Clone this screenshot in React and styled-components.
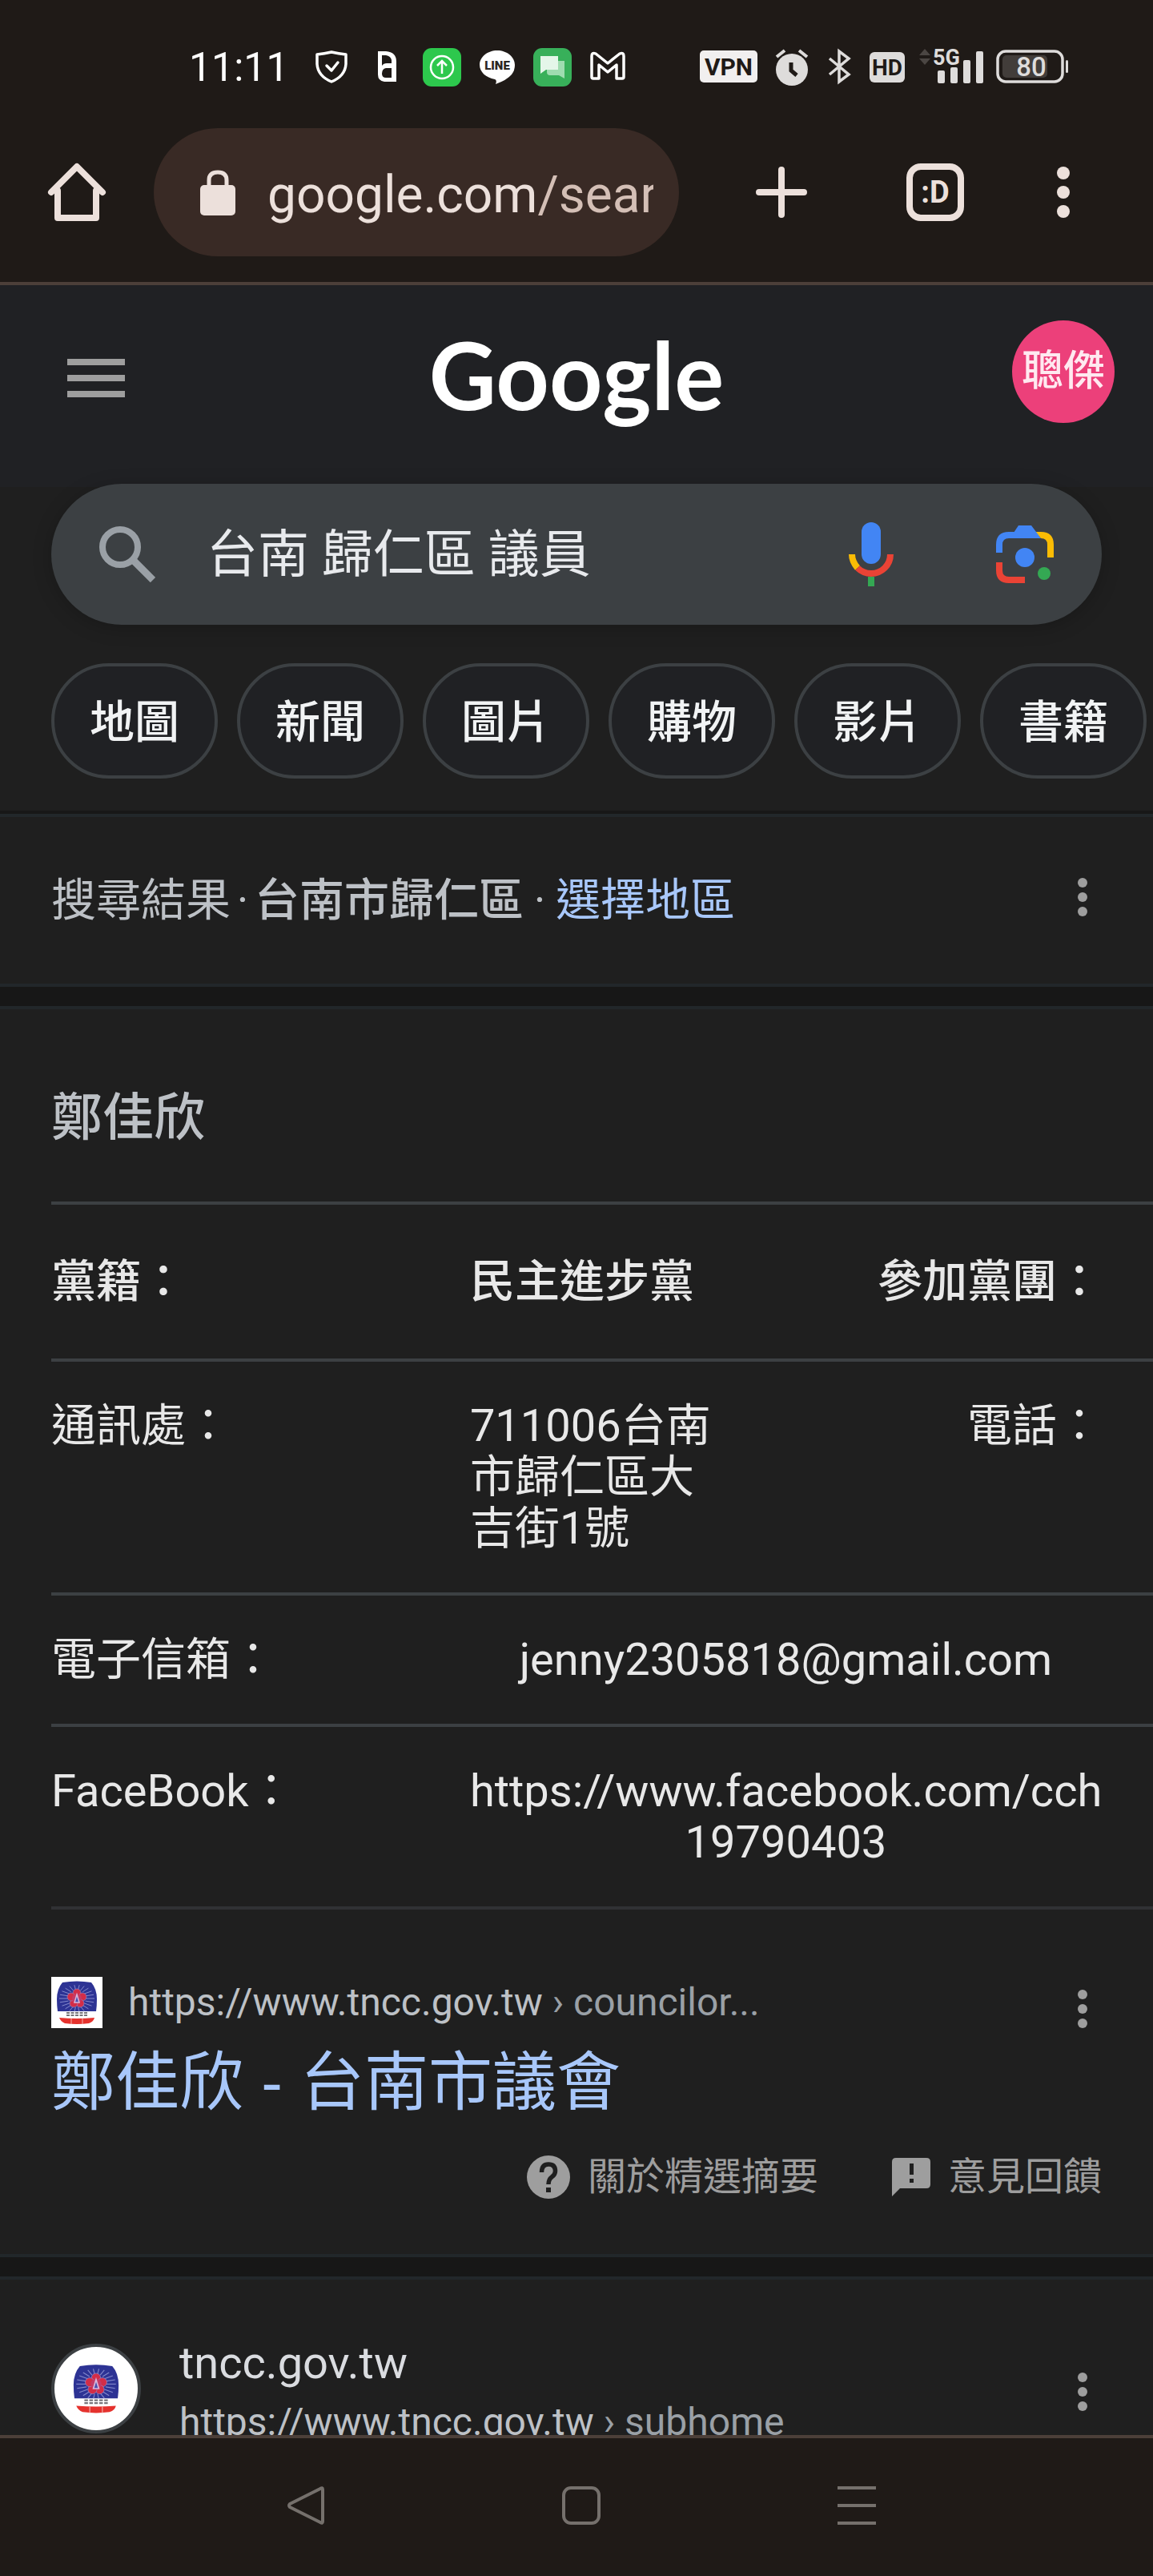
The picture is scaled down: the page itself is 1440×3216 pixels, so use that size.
import React from "react";
import styled, { createGlobalStyle } from "styled-components";

const Global = createGlobalStyle`
  *, *::before, *::after { box-sizing: border-box; }
  html, body, #root { height: 100%; }
  body { margin: 0; background: #1f1f1f; }
  button, input { font: inherit; color: inherit; border: 0; padding: 0; margin: 0; background: none; outline: 0; }
  a { color: inherit; text-decoration: none; }
  svg { display: block; flex: none; }
`;

const Screen = styled.div`
  height: 100%;
  display: flex;
  flex-direction: column;
  overflow: hidden;
  color: #e8e8e8;
  font-family: Roboto, "Noto Sans CJK TC", sans-serif;
  font-size: 56px;
  line-height: 64px;
`;

const StatusBar = styled.div`
  flex: none;
  display: flex;
  align-items: center;
  justify-content: space-between;
  height: 160px;
  padding: 8px 104px 0 236px;
  background: #1f1a17;
`;

const StatusGroup = styled.div`
  display: flex;
  align-items: center;
  gap: ${(p) => p.$gap}px;
`;

const IconSlot = styled.span`
  display: flex;
  justify-content: center;
  width: 48px;
`;

const Clock = styled.time`
  margin-right: 8px;
  font-size: 50px;
  color: #fff;
`;

const Toolbar = styled.div`
  flex: none;
  display: flex;
  align-items: center;
  height: 196px;
  padding: 0 96px 32px 56px;
  background: #1f1a17;
  border-bottom: 4px solid #4c3f39;
  color: #ece0db;
`;

const UrlField = styled.label`
  flex: 1;
  min-width: 0;
  display: flex;
  align-items: center;
  gap: 40px;
  height: 160px;
  margin: 0 92px 0 56px;
  padding: 0 32px 0 58px;
  border-radius: 80px;
  background: #392a25;
`;

const UrlText = styled.span`
  flex: 1;
  padding-top: 8px;
  overflow: hidden;
  white-space: nowrap;
  font-size: 64px;
  line-height: 80px;

  span { color: #d4bfb6; }
`;

const ToolActions = styled.div`
  display: flex;
  align-items: center;
`;

const IconButton = styled.button`
  flex: none;
  display: flex;
  align-items: center;
  justify-content: center;
  margin-left: ${(p) => p.$space || 0}px;
  padding-top: ${(p) => p.$drop || 0}px;
`;

const TabSwitcher = styled(IconButton)`
  width: 72px;
  height: 72px;
  border: 8px solid #ece0db;
  border-radius: 18px;
  font-size: 38px;
  font-weight: 700;
`;

const Viewport = styled.main`
  flex: 1;
  min-height: 0;
  overflow: hidden;
`;

const Header = styled.header`
  display: grid;
  grid-template-columns: 1fr auto 1fr;
  align-items: start;
  height: 252px;
  padding: 44px 48px 0;
  background: #202124;
`;

const MenuButton = styled(IconButton)`
  justify-self: start;
  margin: 48px 0 0 36px;
`;

const Logo = styled.a`
  color: #fff;
  font-family: Lato, sans-serif;
  font-size: 116px;
  font-weight: 700;
  line-height: 136px;
`;

const Avatar = styled.button`
  justify-self: end;
  width: 128px;
  height: 128px;
  border-radius: 50%;
  background: #ec407a;
  color: #ffe9f0;
  font-size: 52px;
  font-weight: 500;
`;

const SearchBox = styled.form`
  display: flex;
  align-items: center;
  height: 176px;
  margin: -4px 64px 0;
  padding: 0 60px;
  border-radius: 88px;
  background: #3c4043;
  box-shadow: 0 4px 24px rgba(0, 0, 0, 0.2);
`;

const SearchInput = styled.input`
  flex: 1;
  min-width: 0;
  height: 112px;
  margin-left: 64px;
  padding-bottom: 12px;
  font-size: 64px;
  color: #e8eaed;
`;

const Chips = styled.nav`
  display: flex;
  gap: 24px;
  padding: 48px 0 40px 64px;
  overflow: hidden;
`;

const Chip = styled.a`
  flex: none;
  display: flex;
  align-items: center;
  justify-content: center;
  width: 208px;
  height: 144px;
  padding-top: 4px;
  border: 4px solid #3c4043;
  border-radius: 72px;
  background: #202124;
  color: #f1f3f4;
  font-weight: 500;
`;

const Region = styled.section`
  display: flex;
  align-items: center;
  justify-content: space-between;
  height: 216px;
  padding: 0 82px 4px 64px;
  border-top: 4px solid #171717;
  box-shadow: inset 0 4px #22272a;
  color: #bdc1c6;
`;

const RegionText = styled.p`
  margin: 0;
  padding-top: 8px;
  strong { font-weight: 500; }
  a { color: #a8c7fa; }
`;

const Dot = styled.span`
  display: inline-block;
  width: ${(p) => p.$width}px;
  text-align: center;
`;

const Divider = styled.div`
  height: 32px;
  border: solid #22272a;
  border-width: 4px 0;
  background: #171717;
`;

const Snippet = styled.section`
  padding: 104px 0 64px 64px;
`;

const Name = styled.h2`
  margin: 0 0 72px;
  color: #bdc1c6;
  font-size: 64px;
  font-weight: 500;
  line-height: 64px;
`;

const Facts = styled.table`
  width: 100%;
  border-collapse: separate;
  border-spacing: 0;
  table-layout: fixed;
  text-align: left;
  border-bottom: 4px solid #303134;
`;

const Column = styled.col`
  width: ${(p) => p.$width || "auto"};
`;

const Row = styled.tr`
  th, td {
    padding: ${(p) => p.$space}px 0;
    border-top: 4px solid #3c4043;
    font-weight: ${(p) => (p.$strong ? 500 : 400)};
    vertical-align: top;
    white-space: nowrap;
  }
`;

const Cell = styled.td`
  && {
    padding-right: 64px;
    text-align: ${(p) => p.$align || "left"};
  }
`;

const SourceLine = styled.div`
  display: flex;
  align-items: center;
  height: 64px;
  margin-top: 84px;
  padding-right: 82px;
`;

const Url = styled.cite`
  flex: 1;
  margin-left: 32px;
  font-size: 48px;
  font-style: normal;
  color: #bdc1c6;
  span { color: #9aa0a6; }
`;

const ResultTitle = styled.h3`
  margin: 20px 0 0;
  color: #a8c7fa;
  font-family: "Liberation Sans", "Noto Sans CJK TC", sans-serif;
  font-size: 80px;
  font-weight: 400;
  line-height: 96px;
`;

const Feedback = styled.div`
  display: flex;
  justify-content: flex-end;
  gap: 92px;
  margin-top: 38px;
  padding-right: 64px;
  color: #9e9e9e;
  font-size: 48px;
`;

const FeedbackLink = styled.a`
  display: flex;
  align-items: center;
  gap: 22px;
`;

const Result = styled.section`
  display: flex;
  align-items: flex-start;
  padding: 72px 82px 0 64px;
`;

const RoundIcon = styled.span`
  flex: none;
  display: flex;
  align-items: center;
  justify-content: center;
  width: 112px;
  height: 112px;
  margin-top: 8px;
  border: 4px solid #3c4043;
  border-radius: 50%;
  background: #fff;
`;

const ResultText = styled.a`
  flex: 1;
  display: flex;
  flex-direction: column;
  gap: 10px;
  margin-left: 48px;
  color: #dadce0;
`;

const ResultUrl = styled(Url)`
  margin: 0;
`;

const NavBar = styled.nav`
  flex: none;
  display: flex;
  align-items: center;
  justify-content: center;
  gap: 296px;
  height: 176px;
  padding: 0 0 4px 12px;
  border-top: 4px solid #4c3f39;
  background: #1f1a17;
`;

const StatusIcon = ({ w, h = 48, children, ...rest }) => (
  <svg width={w} height={h} viewBox={`0 0 ${w} ${h}`} fill="none" aria-hidden="true" {...rest}>
    {children}
  </svg>
);

const Kebab = () => (
  <svg width="12" height="48" viewBox="0 0 12 48" fill="#9e9e9e" aria-hidden="true">
    <circle cx="6" cy="6" r="6" />
    <circle cx="6" cy="24" r="6" />
    <circle cx="6" cy="42" r="6" />
  </svg>
);

const rays = Array.from({ length: 22 }, (_, i) => (i * Math.PI) / 11);

const Emblem = ({ size, plate }) => (
  <svg width={size} height={size} viewBox="0 0 64 64" aria-hidden="true">
    {plate && <rect width="64" height="64" fill="#fff" />}
    <path d="M14 7Q32 4 50 7Q57 15 57 28Q57 36 56 43H8Q7 36 7 28Q7 15 14 7Z" fill="#2d3394" />
    {rays.map((a) => (
      <line
        key={a}
        x1={32 + 11 * Math.cos(a)}
        y1={27 + 11 * Math.sin(a)}
        x2={32 + 22 * Math.cos(a)}
        y2={27 + 17 * Math.sin(a)}
        stroke="#8489cc"
        strokeWidth="1"
      />
    ))}
    <g fill="#d32d48" stroke="#8f8fd0" strokeWidth="0.6">
      <circle cx="32" cy="20" r="5" />
      <circle cx="39" cy="25" r="5" />
      <circle cx="36" cy="33" r="5" />
      <circle cx="28" cy="33" r="5" />
      <circle cx="25" cy="25" r="5" />
    </g>
    <circle cx="32" cy="27" r="6" fill="#c53a66" />
    <path d="M32 22L35 32H29Z" fill="#4a50b0" stroke="#d9b7db" strokeWidth="1.5" />
    <path d="M8 43H56V51H8Z" fill="#fff" />
    <path d="M19 45H46M19 48H46" stroke="#77757a" strokeWidth="2" strokeDasharray="4 1.5" />
    <path d="M10 51Q32 53 54 51Q53 56 47 58Q32 60 17 58Q12 56 10 51Z" fill="#e5322d" />
    <path d="M25 52V59M39 52V59" stroke="#f5b2ac" strokeWidth="1" />
  </svg>
);

const chips = ["地圖", "新聞", "圖片", "購物", "影片", "書籍"];

export default function App() {
  return (
    <Screen lang="zh-Hant">
      <Global />
      <StatusBar>
        <StatusGroup $gap={21}>
          <Clock>11:11</Clock>
          <IconSlot>
            <StatusIcon w={48} stroke="#fff" strokeWidth="3.5" strokeLinecap="round" strokeLinejoin="round">
              <path d="M24 5Q33 7 42 8V20Q41 35 24 42Q7 35 6 20V8Q15 7 24 5Z" />
              <path d="M18 22L24 28L32 18" />
            </StatusIcon>
          </IconSlot>
          <IconSlot>
            <StatusIcon w={36}>
              <path fillRule="evenodd" fill="#fff" d="M7 4H17Q30 5 30 17V42H15Q7 41 7 33ZM12 9V22Q14 19 18 19H24V15Q23 10 17 9ZM24 25H17Q12 26 12 32Q12 37 17 37H24Z" />
            </StatusIcon>
          </IconSlot>
          <IconSlot>
            <StatusIcon w={48}>
              <rect width="48" height="48" rx="11" fill="#2dc84d" />
              <circle cx="24" cy="24" r="14" stroke="#fff" strokeWidth="2.5" />
              <path d="M24 32V17M18 22L24 16L30 22" stroke="#fff" strokeWidth="2.5" />
            </StatusIcon>
          </IconSlot>
          <IconSlot>
            <StatusIcon w={44}>
              <path d="M22 3C10 3 0 11 0 21C0 30 8 37 19 39Q22 40 20 45Q34 40 40 33Q44 28 44 21C44 11 34 3 22 3Z" fill="#fff" />
              <text x="22" y="27" textAnchor="middle" fill="#2b2522" fontFamily="Roboto" fontSize="15" fontWeight="900">LINE</text>
            </StatusIcon>
          </IconSlot>
          <IconSlot>
            <StatusIcon w={48}>
              <rect width="48" height="48" rx="11" fill="#38b05a" />
              <path d="M17 16H39V38L32 34H21Q17 34 17 30Z" fill="#9fdcb0" />
              <path d="M9 10H31V27H16L9 32Z" fill="#e4f6e9" />
            </StatusIcon>
          </IconSlot>
          <IconSlot>
            <StatusIcon w={44} stroke="#fff" strokeWidth="3.5" strokeLinejoin="round">
              <path d="M2 36V10Q2 5 7 7L22 19L37 7Q42 5 42 10V36Q42 38 40 38H33V21L22 30L11 21V38H4Q2 38 2 36Z" />
            </StatusIcon>
          </IconSlot>
        </StatusGroup>
        <StatusGroup $gap={15}>
          <StatusGroup $gap={22}>
            <StatusIcon w={72}>
              <rect y="3" width="72" height="40" rx="5" fill="#f1efef" />
              <text x="36" y="34" textAnchor="middle" fill="#1f1a17" fontFamily="Roboto" fontSize="30" fontWeight="700">VPN</text>
            </StatusIcon>
            <StatusIcon w={42}>
              <circle cx="21" cy="27" r="20" fill="#dedcdb" />
              <path d="M2 11L12 3M40 11L30 3" stroke="#dedcdb" strokeWidth="4" />
              <path d="M20 18V28L27 34" stroke="#1f1a17" strokeWidth="5" />
            </StatusIcon>
            <StatusIcon w={32} stroke="#dedcdb" strokeWidth="3.5">
              <path d="M4 13L28 33L16 42V4L28 13L4 33" />
            </StatusIcon>
            <StatusIcon w={44}>
              <rect y="5" width="44" height="38" rx="6" fill="#dedcdb" />
              <text x="22" y="34" textAnchor="middle" fill="#1f1a17" fontFamily="Roboto" fontSize="28" fontWeight="700">HD</text>
            </StatusIcon>
          </StatusGroup>
          <StatusIcon w={84} fill="#dedcdb">
            <path d="M3 9L10 1L17 9ZM3 13H17L10 21Z" fill="#4b4643" />
            <text x="20" y="21" fill="#dedcdb" fontFamily="Roboto" fontSize="27" fontWeight="700">5G</text>
            <rect x="26" y="28" width="9" height="16" rx="2" />
            <rect x="42" y="24" width="9" height="20" rx="2" />
            <rect x="58" y="15" width="9" height="29" rx="2" />
            <rect x="74" y="4" width="9" height="40" rx="2" />
          </StatusIcon>
          <StatusIcon w={92}>
            <rect x="2" y="4" width="81" height="38" rx="10" stroke="#dedcdb" strokeWidth="3.5" />
            <rect x="8" y="9" width="56" height="28" rx="5" fill="#423d3a" />
            <rect x="87" y="15" width="3" height="16" rx="1.5" fill="#dedcdb" />
            <text x="44" y="35" textAnchor="middle" fill="#dedcdb" fontFamily="Roboto" fontSize="33" fontWeight="500">80</text>
          </StatusIcon>
        </StatusGroup>
      </StatusBar>

      <Toolbar>
        <IconButton aria-label="首頁">
          <svg width="80" height="80" viewBox="0 0 80 80" fill="none" stroke="#ece0db" strokeWidth="8" strokeLinecap="round" strokeLinejoin="round" aria-hidden="true">
            <path d="M8 40L40 8L72 40M16 38V72H64V38" />
          </svg>
        </IconButton>
        <UrlField>
          <svg width="44" height="60" viewBox="0 0 44 60" aria-hidden="true">
            <path d="M11 26V15Q11 5 22 5Q33 5 33 15V26" fill="none" stroke="#ece0db" strokeWidth="5" />
            <rect y="21" width="44" height="38" rx="5" fill="#ece0db" />
          </svg>
          <UrlText>google.com<span>/sear</span></UrlText>
        </UrlField>
        <ToolActions>
          <IconButton aria-label="新增分頁">
            <svg width="72" height="64" viewBox="0 0 72 64" stroke="#ece0db" strokeWidth="8" strokeLinecap="round" aria-hidden="true">
              <path d="M36 4V60M8 32H64" />
            </svg>
          </IconButton>
          <TabSwitcher $space={120} aria-label="分頁">:D</TabSwitcher>
          <IconButton $space={108} aria-label="更多">
            <svg width="32" height="64" viewBox="0 0 32 64" fill="#ece0db" aria-hidden="true">
              <circle cx="16" cy="8" r="8" />
              <circle cx="16" cy="32" r="8" />
              <circle cx="16" cy="56" r="8" />
            </svg>
          </IconButton>
        </ToolActions>
      </Toolbar>

      <Viewport>
        <Header>
          <MenuButton aria-label="選單">
            <svg width="72" height="48" viewBox="0 0 72 48" fill="#9e9e9e" aria-hidden="true">
              <path d="M0 0H72V8H0ZM0 20H72V28H0ZM0 40H72V48H0Z" />
            </svg>
          </MenuButton>
          <Logo href="#">Google</Logo>
          <Avatar>聰傑</Avatar>
        </Header>

        <SearchBox role="search">
          <svg width="70" height="70" viewBox="0 0 70 70" fill="none" stroke="#9aa0a6" strokeWidth="8" aria-hidden="true">
            <circle cx="26" cy="26" r="22" />
            <path d="M42 42L67 67" strokeWidth="9" />
          </svg>
          <SearchInput aria-label="搜尋" defaultValue="台南 歸仁區 議員" />
          <IconButton type="button" aria-label="語音搜尋">
            <svg width="56" height="80" viewBox="0 0 56 80" fill="none" aria-hidden="true">
              <rect x="16" width="24" height="52" rx="12" fill="#4285f4" />
              <path d="M4 40Q4 49 11 57" stroke="#fbbc04" strokeWidth="8" />
              <path d="M11 57Q18 64 28 64Q38 64 45 57Q52 50 52 40" stroke="#ea4335" strokeWidth="8" />
              <path d="M28 68V80" stroke="#34a853" strokeWidth="8" />
            </svg>
          </IconButton>
          <IconButton $space={128} type="button" aria-label="以圖搜尋">
            <svg width="72" height="72" viewBox="0 0 72 72" fill="none" aria-hidden="true">
              <path d="M4 34V24Q4 12 16 12H54" stroke="#4285f4" strokeWidth="8" />
              <path d="M22 9L28 0H44L56 16H22Z" fill="#4285f4" />
              <path d="M50 8H56Q72 8 72 24V40H64V24Q64 16 56 16Z" fill="#fbbc04" />
              <path d="M4 46V56Q4 68 16 68H36" stroke="#ea4335" strokeWidth="8" />
              <circle cx="36" cy="40" r="12" fill="#4285f4" />
              <circle cx="60" cy="60" r="8" fill="#34a853" />
            </svg>
          </IconButton>
        </SearchBox>

        <Chips>
          {chips.map((c) => (
            <Chip key={c} href="#">{c}</Chip>
          ))}
        </Chips>

        <Region>
          <RegionText>
            搜尋結果<Dot $width={30}>·</Dot><strong>台南市歸仁區</strong><Dot $width={40}>·</Dot><a href="#">選擇地區</a>
          </RegionText>
          <IconButton aria-label="更多選項"><Kebab /></IconButton>
        </Region>
        <Divider />

        <Snippet>
          <Name>鄭佳欣</Name>
          <Facts>
            <colgroup>
              <Column $width="38%" />
              <Column />
              <Column $width="31%" />
            </colgroup>
            <tbody>
              <Row $space={64} $strong>
                <th scope="row">黨籍：</th>
                <Cell>民主進步黨</Cell>
                <Cell $align="right">參加黨團：</Cell>
              </Row>
              <Row $space={48}>
                <th scope="row">通訊處：</th>
                <Cell>711006台南<br />市歸仁區大<br />吉街1號</Cell>
                <Cell $align="right">電話：</Cell>
              </Row>
              <Row $space={48}>
                <th scope="row">電子信箱：</th>
                <Cell colSpan={2} $align="center">jenny2305818@gmail.com</Cell>
              </Row>
              <Row $space={48}>
                <th scope="row">FaceBook：</th>
                <Cell colSpan={2} $align="center">https://www.facebook.com/cch<br />19790403</Cell>
              </Row>
            </tbody>
          </Facts>

          <SourceLine>
            <Emblem size={64} plate />
            <Url>https://www.tncc.gov.tw<span> › councilor...</span></Url>
            <IconButton aria-label="更多選項" $drop={16}><Kebab /></IconButton>
          </SourceLine>
          <ResultTitle><a href="#">鄭佳欣 - 台南市議會</a></ResultTitle>
          <Feedback>
            <FeedbackLink href="#">
              <svg width="54" height="54" viewBox="0 0 54 54" aria-hidden="true">
                <circle cx="27" cy="27" r="27" fill="#9e9e9e" />
                <path d="M18.500 21Q18.500 11 27 11Q35.500 11 35.500 19.500Q35.500 24 31 27Q27 30 27 36" fill="none" stroke="#1f1f1f" strokeWidth="5.500" />
                <path d="M24 40H30V46H24Z" fill="#1f1f1f" />
              </svg>
              關於精選摘要
            </FeedbackLink>
            <FeedbackLink href="#">
              <svg width="48" height="48" viewBox="0 0 48 48" aria-hidden="true">
                <path d="M5 0H43Q48 0 48 5V33Q48 38 43 38H10L0 48V5Q0 0 5 0Z" fill="#9e9e9e" />
                <path d="M22 7H27V21H22ZM22 26H27V31H22Z" fill="#1f1f1f" />
              </svg>
              意見回饋
            </FeedbackLink>
          </Feedback>
        </Snippet>
        <Divider />

        <Result>
          <RoundIcon><Emblem size={72} /></RoundIcon>
          <ResultText href="#">
            tncc.gov.tw
            <ResultUrl>https://www.tncc.gov.tw<span> › subhome</span></ResultUrl>
          </ResultText>
          <IconButton aria-label="更多選項" $drop={44}><Kebab /></IconButton>
        </Result>
      </Viewport>

      <NavBar>
        <IconButton aria-label="返回">
          <svg width="48" height="48" viewBox="0 0 48 48" fill="none" stroke="#75706c" strokeWidth="4" strokeLinejoin="round" aria-hidden="true">
            <path d="M45 4V44Q45 47 42 45L4 26Q2 24 4 22L42 3Q45 1 45 4Z" />
          </svg>
        </IconButton>
        <IconButton aria-label="主畫面">
          <svg width="48" height="48" viewBox="0 0 48 48" fill="none" stroke="#75706c" strokeWidth="4" aria-hidden="true">
            <rect x="2" y="2" width="44" height="44" rx="9" />
          </svg>
        </IconButton>
        <IconButton aria-label="最近使用">
          <svg width="48" height="48" viewBox="0 0 48 48" fill="none" stroke="#75706c" strokeWidth="4" aria-hidden="true">
            <path d="M0 2H48M0 24H48M0 46H48" />
          </svg>
        </IconButton>
      </NavBar>
    </Screen>
  );
}
